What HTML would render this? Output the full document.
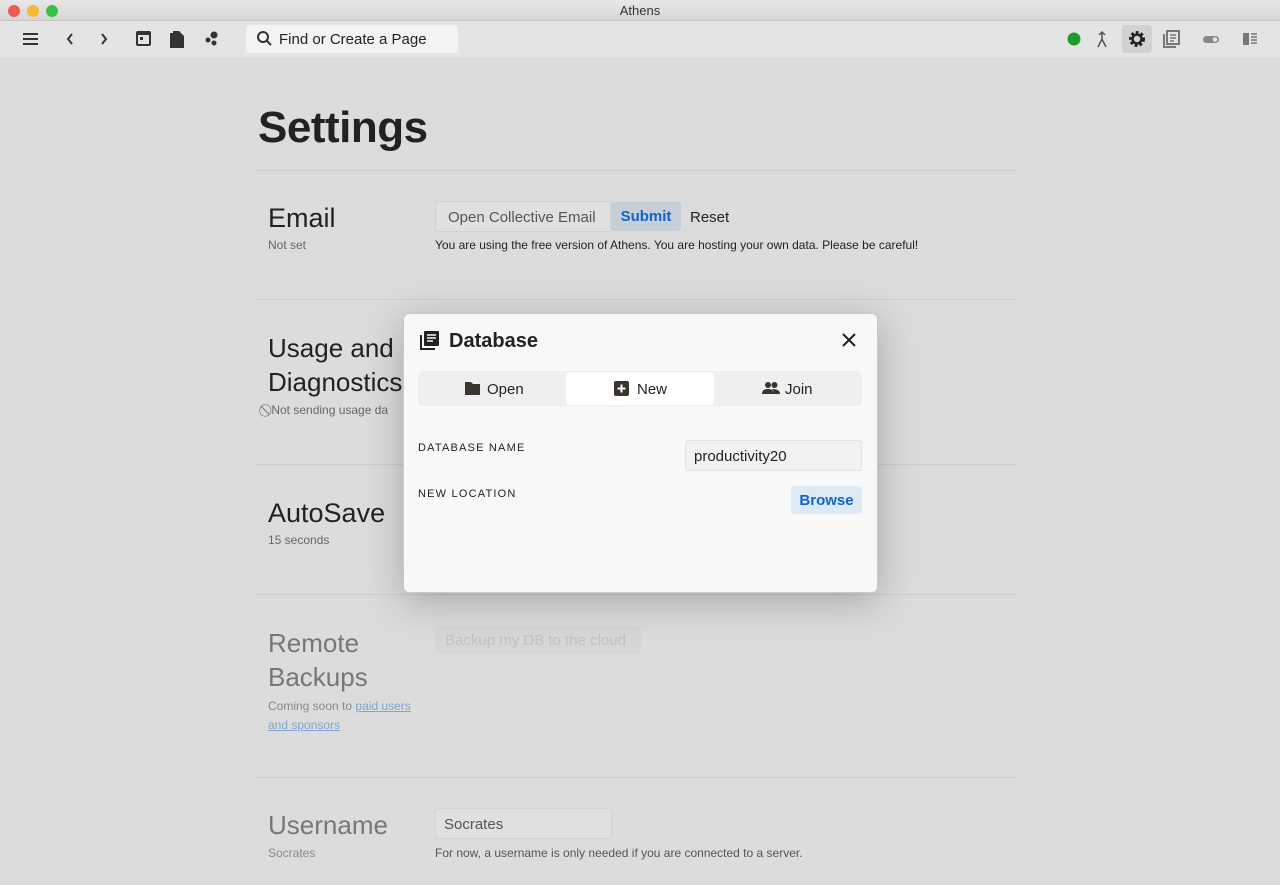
<!DOCTYPE html>
<html><head><meta charset="utf-8"><style>
*{box-sizing:border-box;margin:0;padding:0}
body{width:1280px;height:885px;overflow:hidden;background:#dcdcdc;font-family:"Liberation Sans",sans-serif;color:#222;position:relative}
.abs{position:absolute}
.title{left:0;top:0;width:1280px;height:21px;background:linear-gradient(#e8e8e8,#d6d6d6);border-bottom:1px solid #c4c4c4;text-align:center;font-size:13px;line-height:21px;color:#333}
.dot{top:5px;width:12px;height:12px;border-radius:50%}
.tb{left:0;top:21px;width:1280px;height:36px;background:#e4e4e4}
.line{left:256px;width:760px;height:1px;background:#cdcdcd}
h2{position:absolute;font-size:27px;font-weight:normal;color:#222;line-height:34px}
.sub{position:absolute;font-size:12px;color:#666}
.grey{color:#777}
.modal{left:403px;top:313px;width:475px;height:280px;background:#f8f8f8;border-radius:6px;box-shadow:0 8px 40px rgba(0,0,0,.25);border:1px solid #c8c8c8}
.cap{font-size:11px;letter-spacing:1.2px;color:#222}
</style></head><body>
<div class="abs title">Athens</div>
<div class="abs dot" style="left:8px;background:#ee5a52"></div>
<div class="abs dot" style="left:27px;background:#f5b83a"></div>
<div class="abs dot" style="left:46px;background:#34c146"></div>
<div class="abs tb"></div>
<svg class="abs" style="left:0;top:21px" width="480" height="36">
<g fill="#333"><rect x="23" y="12" width="15" height="2"/><rect x="23" y="17" width="15" height="2"/><rect x="23" y="22" width="15" height="2"/></g>
<path d="M72 13l-4 5 4 5" stroke="#333" stroke-width="2" fill="none"/>
<path d="M102 13l4 5-4 5" stroke="#333" stroke-width="2" fill="none"/>
<rect x="137" y="11" width="13" height="13" rx="1" fill="none" stroke="#333" stroke-width="2"/><rect x="137" y="10" width="13" height="4" fill="#333"/><rect x="140" y="16" width="3" height="3" fill="#333"/>
<path d="M170 12h6v13h8v2h-14z" fill="#333"/><path d="M173 10h6l5 5v10h-11z" fill="#333"/>
<circle cx="214" cy="14" r="3.5" fill="#333"/><circle cx="208" cy="19" r="2.5" fill="#333"/><circle cx="214" cy="22" r="2.5" fill="#333"/>
<rect x="246" y="4" width="212" height="28" rx="4" fill="#f3f3f3"/>
<circle cx="263" cy="16" r="5" fill="none" stroke="#333" stroke-width="2"/><path d="M266 19l5 5" stroke="#333" stroke-width="2"/>
</svg>
<div class="abs" style="left:279px;top:31px;font-size:15px;color:#222">Find or Create a Page</div>
<svg class="abs" style="left:1050px;top:21px" width="230" height="36">
<circle cx="24" cy="18" r="6.5" fill="#1d9d2f"/>
<path d="M48 26l4-8 4 8M52 18v-7M49 14l3-3 3 3" stroke="#555" stroke-width="1.5" fill="none"/>
<rect x="72" y="4" width="30" height="28" rx="3" fill="#d2d2d2"/>
<circle cx="87" cy="18" r="6" fill="none" stroke="#222" stroke-width="4" stroke-dasharray="2.5 2"/><circle cx="87" cy="18" r="4.5" fill="none" stroke="#222" stroke-width="2.5"/>
<rect x="117" y="10" width="12" height="13" fill="none" stroke="#777" stroke-width="2"/><path d="M114 13v13h12" stroke="#777" stroke-width="2" fill="none"/><path d="M120 14h6M120 17h6M120 20h4" stroke="#777" stroke-width="1.5"/>
<rect x="153" y="15" width="16" height="7" rx="3.5" fill="#888"/><circle cx="165" cy="18.5" r="2.3" fill="#e4e4e4"/>
<rect x="193" y="12" width="6" height="12" fill="#777"/><path d="M201 13h6M201 16h6M201 19h6M201 22h6" stroke="#777" stroke-width="1.5"/>
</svg>
<div class="abs" style="left:258px;top:103px;font-size:44px;font-weight:bold;letter-spacing:-0.5px;color:#222">Settings</div>
<div class="abs line" style="top:170px"></div>
<div class="abs line" style="top:299px"></div>
<div class="abs line" style="top:464px"></div>
<div class="abs line" style="top:594px"></div>
<div class="abs line" style="top:777px"></div>
<h2 style="left:268px;top:201px">Email</h2>
<div class="sub" style="left:268px;top:238px">Not set</div>
<div class="abs" style="left:435px;top:201px;width:176px;height:31px;background:#e0e0e0;border:1px solid #d0d0d0;border-radius:3px;font-size:15px;color:#555;padding:7px 0 0 12px">Open Collective Email</div>
<div class="abs" style="left:611px;top:202px;width:70px;height:29px;background:#c6ced8;border-radius:3px;font-size:15px;font-weight:bold;color:#1464c8;text-align:center;padding-top:6px">Submit</div>
<div class="abs" style="left:690px;top:209px;font-size:15px;color:#222">Reset</div>
<div class="abs" style="left:435px;top:238px;font-size:12px;color:#222">You are using the free version of Athens. You are hosting your own data. Please be careful!</div>
<h2 style="left:268px;top:331px;font-size:26px">Usage and<br>Diagnostics</h2>
<div class="sub" style="left:268px;top:403px">⃠ Not sending usage da</div>
<h2 style="left:268px;top:496px">AutoSave</h2>
<div class="sub" style="left:268px;top:533px">15 seconds</div>
<h2 class="grey" style="left:268px;top:626px;font-size:26px">Remote<br>Backups</h2>
<div class="sub" style="left:268px;top:697px;color:#888;line-height:19px">Coming soon to <span style="color:#7fa3d0;text-decoration:underline">paid users<br>and sponsors</span></div>
<div class="abs" style="left:435px;top:626px;width:206px;height:28px;background:#d6d6d6;border-radius:3px;font-size:15px;color:#c2c2c2;padding:6px 0 0 10px">Backup my DB to the cloud</div>
<h2 class="grey" style="left:268px;top:808px;font-size:26px">Username</h2>
<div class="sub" style="left:268px;top:846px;color:#888">Socrates</div>
<div class="abs" style="left:435px;top:808px;width:177px;height:31px;background:#e0e0e0;border:1px solid #d4d4d4;border-radius:3px;font-size:15px;color:#555;padding:7px 0 0 8px">Socrates</div>
<div class="abs" style="left:435px;top:846px;font-size:12px;color:#555">For now, a username is only needed if you are connected to a server.</div>

<div class="abs modal">
<svg class="abs" style="left:15px;top:16px" width="22" height="22"><rect x="5" y="1" width="15" height="15" rx="1" fill="#222"/><path d="M8 5h9M8 8h9M8 11h6" stroke="#f8f8f8" stroke-width="1.5"/><path d="M2 5v14h14" stroke="#222" stroke-width="2" fill="none"/></svg>
<div class="abs" style="left:45px;top:16px;font-size:20px;font-weight:bold;color:#222">Database</div>
<svg class="abs" style="left:437px;top:18px" width="16" height="16"><path d="M2 2l12 12M14 2L2 14" stroke="#222" stroke-width="2"/></svg>
<div class="abs" style="left:14px;top:57px;width:444px;height:35px;background:#efefef;border-radius:5px"></div>
<div class="abs" style="left:162px;top:58px;width:148px;height:33px;background:#fff;border-radius:4px"></div>
<svg class="abs" style="left:60px;top:66px" width="17" height="16"><path d="M1 2h6l2 2h7v11H1z" fill="#3a352f"/></svg>
<div class="abs" style="left:83px;top:67px;font-size:15px;color:#222">Open</div>
<svg class="abs" style="left:210px;top:67px" width="15" height="15"><rect x="0" y="0" width="15" height="15" rx="2" fill="#3a352f"/><path d="M7.5 3.5v8M3.5 7.5h8" stroke="#fff" stroke-width="2"/></svg>
<div class="abs" style="left:233px;top:67px;font-size:15px;color:#222">New</div>
<svg class="abs" style="left:358px;top:67px" width="18" height="14"><circle cx="6" cy="4" r="3" fill="#3a352f"/><circle cx="12.5" cy="4" r="3" fill="#3a352f"/><path d="M0 13c0-4 3-5 6-5s6 1 6 5zM12 13c0-3-1-4-2-5 4 0 8 1 8 5z" fill="#3a352f"/></svg>
<div class="abs" style="left:381px;top:67px;font-size:15px;color:#222">Join</div>
<div class="abs cap" style="left:14px;top:128px">DATABASE NAME</div>
<div class="abs" style="left:281px;top:126px;width:177px;height:31px;background:#f2f2f2;border:1px solid #e2e2e2;border-radius:3px;font-size:15px;color:#222;padding:7px 0 0 8px">productivity20</div>
<div class="abs cap" style="left:14px;top:174px">NEW LOCATION</div>
<div class="abs" style="left:387px;top:172px;width:71px;height:28px;background:#dde9f5;border-radius:3px;font-size:15px;font-weight:bold;color:#1464c8;text-align:center;padding-top:6px">Browse</div>
</div>
</body></html>
